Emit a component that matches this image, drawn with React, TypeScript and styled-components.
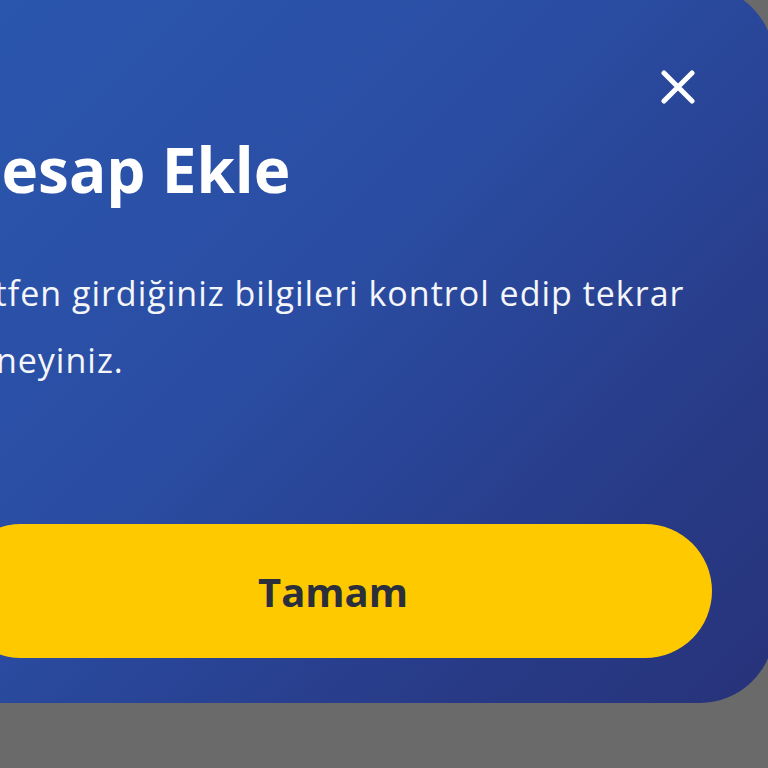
import React from "react";
import styled, { createGlobalStyle } from "styled-components";

const Global = createGlobalStyle`
  html, body {
    margin: 0;
    padding: 0;
    background: #6a6a6a;
    overflow: hidden;
  }
  body {
    width: 768px;
    height: 768px;
    font-family: "Open Sans", "Noto Sans", sans-serif;
  }
`;

const Stage = styled.div`
  width: 768px;
  height: 768px;
  overflow: hidden;
  background: #6a6a6a;
`;

const Modal = styled.div`
  box-sizing: border-box;
  width: 882px;
  margin-left: -108px;
  margin-top: -14px;
  padding: 81px 62px 45px;
  border-radius: 74px;
  background: linear-gradient(135deg, #2b58b0 0%, #2a4da3 45%, #283a86 80%, #27337a 100%);
  display: flex;
  flex-direction: column;
`;

const CloseRow = styled.div`
  display: flex;
  justify-content: flex-end;
  padding-right: 14px;
`;

const CloseButton = styled.button`
  width: 40px;
  height: 40px;
  padding: 0;
  border: none;
  background: transparent;
  display: flex;
  align-items: center;
  justify-content: center;
  cursor: pointer;
`;

const Title = styled.h1`
  margin: 25px 0 0;
  font-size: 62px;
  line-height: 74px;
  font-weight: 700;
  color: #ffffff;
  white-space: nowrap;
`;

const Message = styled.p`
  margin: 54px 0 0;
  width: 760px;
  font-size: 34px;
  line-height: 67px;
  letter-spacing: 1px;
  font-weight: 400;
  color: #f5f6fa;
`;

const PrimaryButton = styled.button`
  margin-top: 130px;
  height: 134px;
  border: none;
  border-radius: 67px;
  background: #ffc900;
  color: #2a2f3b;
  font-family: "Open Sans", "Noto Sans", sans-serif;
  font-size: 40px;
  font-weight: 700;
  cursor: pointer;
`;

const CloseIcon = () => (
  <svg width="34" height="34" viewBox="0 0 34 34" fill="none">
    <path d="M3 3 L31 31 M31 3 L3 31" stroke="#ffffff" strokeWidth="5" strokeLinecap="round" />
  </svg>
);

export default function App() {
  return (
    <Stage>
      <Global />
      <Modal>
        <CloseRow>
          <CloseButton aria-label="Kapat">
            <CloseIcon />
          </CloseButton>
        </CloseRow>
        <Title>Hesap Ekle</Title>
        <Message>
          Lütfen girdiğiniz bilgileri kontrol edip tekrar deneyiniz.
        </Message>
        <PrimaryButton>Tamam</PrimaryButton>
      </Modal>
    </Stage>
  );
}
